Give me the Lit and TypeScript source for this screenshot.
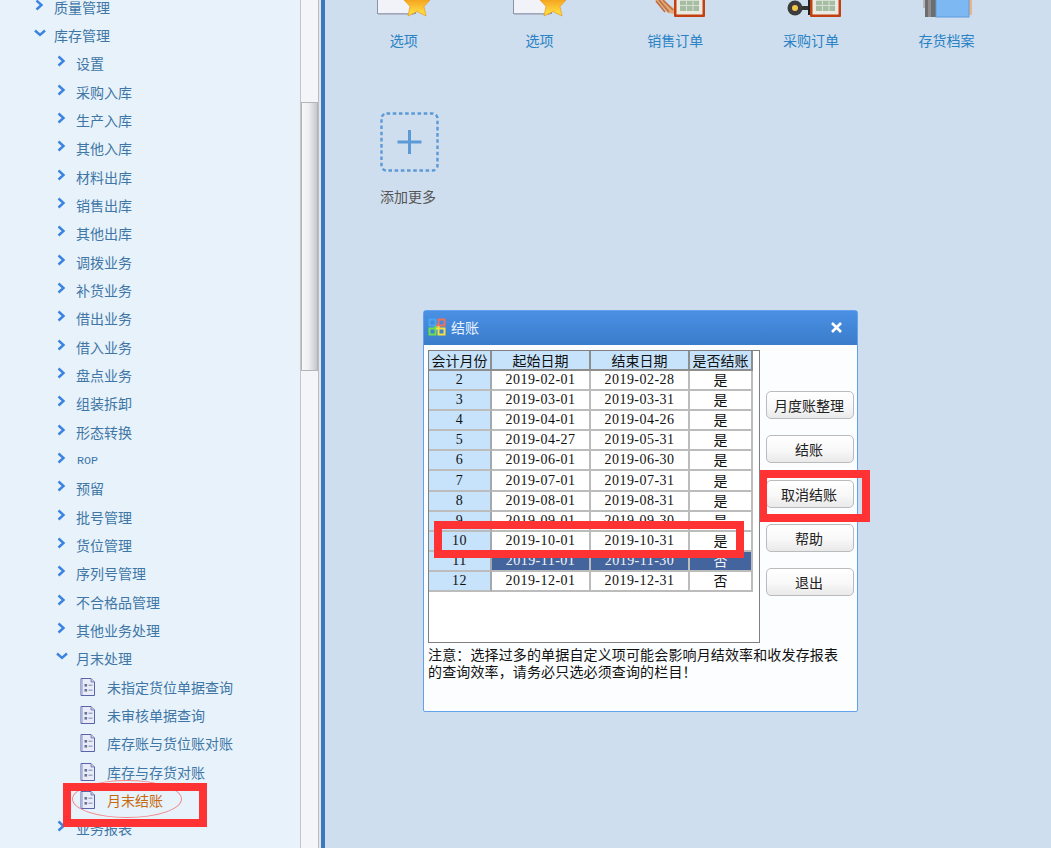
import { LitElement, html, css, svg } from 'lit';
import { customElement } from 'lit/decorators.js';

type Level = 'top' | 'sub' | 'leaf';
interface TreeRow {
  label: string;
  level: Level;
  open?: boolean;
  active?: boolean;
  small?: boolean;
}

const sub = (label: string): TreeRow => ({ label, level: 'sub' });
const leaf = (label: string, active = false): TreeRow => ({ label, level: 'leaf', active });

const TREE: TreeRow[] = [
  { label: '质量管理', level: 'top' },
  { label: '库存管理', level: 'top', open: true },
  ...['设置', '采购入库', '生产入库', '其他入库', '材料出库', '销售出库', '其他出库', '调拨业务', '补货业务', '借出业务', '借入业务', '盘点业务', '组装拆卸', '形态转换'].map(sub),
  { label: 'ROP', level: 'sub', small: true },
  ...['预留', '批号管理', '货位管理', '序列号管理', '不合格品管理', '其他业务处理'].map(sub),
  { label: '月末处理', level: 'sub', open: true },
  leaf('未指定货位单据查询'),
  leaf('未审核单据查询'),
  leaf('库存账与货位账对账'),
  leaf('库存与存货对账'),
  leaf('月末结账', true),
  sub('业务报表'),
];

const PERIODS: [string, string, string, string][] = [
  ['2', '2019-02-01', '2019-02-28', '是'],
  ['3', '2019-03-01', '2019-03-31', '是'],
  ['4', '2019-04-01', '2019-04-26', '是'],
  ['5', '2019-04-27', '2019-05-31', '是'],
  ['6', '2019-06-01', '2019-06-30', '是'],
  ['7', '2019-07-01', '2019-07-31', '是'],
  ['8', '2019-08-01', '2019-08-31', '是'],
  ['9', '2019-09-01', '2019-09-30', '是'],
  ['10', '2019-10-01', '2019-10-31', '是'],
  ['11', '2019-11-01', '2019-11-30', '否'],
  ['12', '2019-12-01', '2019-12-31', '否'],
];

const star = svg`<polygon points="63,-9 67,-1 76,0 70,6.5 72,16 63,11.5 54,16 56,6.5 50,0 59,-1" fill="url(#starFill)" stroke="#e59a1c" stroke-width="0.7"/>`;
const docStar = svg`
  <rect x="23.5" y="-10" width="38" height="23.5" fill="#f1f3f8" stroke="#8a92aa"/>
  <rect x="24" y="13.5" width="36" height="1.5" fill="#b4bac9"/>
  ${star}`;
const sheet = svg`
  <rect x="49" y="-6" width="31" height="23" rx="1" fill="#c43f10"/>
  <rect x="51.5" y="-6" width="26" height="20.5" fill="#e9ebe2"/>
  <rect x="55" y="-6" width="19" height="17" fill="#a6bda4"/>
  <path d="M61.5-6V11M68-6V11M55 0.5H74M55 5.5H74" stroke="#d5e0d2" stroke-width="1"/>`;

const ICONS = [
  docStar,
  docStar,
  svg`
    <path d="M30 0L37 0L50 9L50 14L43 13Z" fill="#e3a878"/>
    <path d="M34 0L44 12M38 0L48 10M31 1L40 12" stroke="#bd7040" stroke-width="1.6"/>
    ${sheet}`,
  svg`
    <circle cx="34" cy="8" r="7.5" fill="#3c3c3c"/>
    <circle cx="34" cy="8" r="3" fill="#f5c84a"/>
    <rect x="41" y="6" width="8" height="4" fill="#333"/>
    <rect x="47" y="0" width="2.5" height="15" fill="#222"/>
    ${sheet}`,
  svg`
    <rect x="26" y="0" width="3" height="8" fill="#b5b5b5"/>
    <rect x="28" y="-4" width="11" height="21" fill="#6d6d6d"/>
    <rect x="31" y="-4" width="3" height="21" fill="#8d8d8d"/>
    <rect x="72" y="-4" width="3" height="19" fill="#e8b48a"/>
    <rect x="39" y="-4" width="33" height="21" fill="#7db8f2" stroke="#5c9ce0"/>`,
];

const SHORTCUTS = ['选项', '选项', '销售订单', '采购订单', '存货档案'];
const ACTIONS = ['月度账整理', '结账', '取消结账', '帮助', '退出'];
const HEADERS = ['会计月份', '起始日期', '结束日期', '是否结账'];

@customElement('app-root')
export class AppRoot extends LitElement {
  static override styles = css`
    :host {
      display: block;
      position: relative;
      width: 1051px;
      height: 848px;
      overflow: hidden;
      font-family: 'Noto Sans CJK SC', 'Liberation Sans', sans-serif;
      font-size: 14px;
      background: #cedeee;
    }

    .page {
      display: flex;
      height: 100%;
    }

    /* left tree */
    .sidebar {
      width: 300px;
      flex: none;
      background: #e7f2fb;
      overflow: hidden;
    }

    .tree {
      margin-top: -7.5px;
    }

    .row {
      display: flex;
      align-items: center;
      height: 28.33px;
      color: #3f76a6;
      white-space: nowrap;
      line-height: 16px;
    }

    .row.top { padding-left: 34px; }
    .row.sub { padding-left: 56px; }
    .row.leaf { padding-left: 80px; }
    .row.active { color: #c76a0e; }

    .chevron {
      flex: none;
      width: 12px;
      height: 12px;
      margin-top: -4px;
      margin-right: 8px;
    }

    .leaf-icon {
      flex: none;
      width: 15px;
      height: 18px;
      margin-right: 12px;
    }

    .small {
      font-family: 'Liberation Mono', monospace;
      font-size: 11.67px;
      margin: 3px 0 0 1px;
    }

    .scrollbar {
      position: relative;
      width: 18px;
      flex: none;
      background: #f3f5f9;
      border-left: 1px solid #c4c6cc;
      box-sizing: border-box;
    }

    .thumb {
      position: absolute;
      top: 102px;
      left: 0;
      right: 0;
      height: 269px;
      box-sizing: border-box;
      border: 1px solid #b4b4b8;
      background: linear-gradient(90deg, #f8f8f9 0%, #eeeef0 45%, #c6c6ce 100%);
    }

    .gutter {
      width: 3px;
      flex: none;
      background: #e3e6ea;
      border-left: 1px solid #b9bcc2;
      box-sizing: border-box;
    }

    .divider {
      width: 4px;
      flex: none;
      background: #3b78c0;
    }

    /* desktop */
    .main {
      flex: 1;
      position: relative;
      padding-left: 11px;
    }

    .shortcuts {
      display: grid;
      grid-template-columns: repeat(5, 135.7px);
    }

    .shortcut {
      display: flex;
      flex-direction: column;
      align-items: center;
      color: #2a82c4;
    }

    .shortcut svg {
      display: block;
      width: 100px;
      height: 18px;
    }

    .shortcut span {
      margin-top: 14px;
      line-height: 16px;
    }

    .add {
      width: 58px;
      margin: 64px 0 0 44px;
      color: #565656;
      line-height: 16px;
      white-space: nowrap;
    }

    .add-box {
      display: block;
      width: 60px;
      height: 60px;
      margin-bottom: 16px;
    }

    /* settle dialog */
    .dialog {
      position: absolute;
      left: 98px;
      top: 310px;
      width: 435px;
      height: 402px;
      box-sizing: border-box;
      display: flex;
      flex-direction: column;
      background: #fbfdff;
      border: 1px solid #62a2ec;
      border-radius: 3px 3px 2px 2px;
    }

    .titlebar {
      flex: none;
      height: 34px;
      box-sizing: border-box;
      display: flex;
      align-items: center;
      padding: 0 15px 2px 4px;
      color: #e9f3fd;
      background: linear-gradient(180deg, #4a90e4 0%, #3a7cca 100%);
    }

    .titlebar .app-icon {
      width: 18px;
      height: 18px;
      margin-right: 5px;
    }

    .titlebar .title { flex: 1; }

    .titlebar .close {
      width: 11px;
      height: 11px;
    }

    .body {
      flex: 1;
      display: grid;
      grid-template-columns: 332px 88px;
      column-gap: 6px;
      padding: 5px 0 0 4px;
    }

    .frame {
      width: 332px;
      height: 293px;
      box-sizing: border-box;
      background: #fff;
      border: 1px solid #7f7f7f;
    }

    .grid {
      display: grid;
      grid-template-columns: 63px 99px 99px 63px;
      grid-template-rows: 20px;
      grid-auto-rows: 20.1px;
      font-family: 'Liberation Serif', 'Noto Sans CJK SC', serif;
      color: #111;
    }

    .cell {
      box-sizing: border-box;
      display: flex;
      align-items: center;
      justify-content: center;
      border-right: 2px solid #bcbcbc;
      border-bottom: 2px solid #bcbcbc;
      font-size: 14px;
      letter-spacing: 0.47px;
      line-height: 14px;
      white-space: nowrap;
    }

    .cell.cjk,
    .cell.head {
      font-family: 'Noto Sans CJK SC', sans-serif;
      letter-spacing: 0;
    }

    .cell.cjk {
      padding-bottom: 2px;
    }

    .cell.head {
      background: #c6e3fb;
      border-color: #8e8e8e;
    }

    .cell.month {
      background: #c6e3fb;
      border-right-color: #a5a8ab;
    }

    .cell.selected {
      background: #44649d;
      color: #f1f4fa;
    }

    .note {
      margin: 3px 0 0;
      color: #111;
      line-height: 17px;
      letter-spacing: 0.14px;
      white-space: nowrap;
    }

    .actions {
      display: flex;
      flex-direction: column;
      gap: 16.25px;
      padding-top: 41px;
    }

    .actions button {
      height: 28px;
      padding: 0 2px 0 0;
      font: inherit;
      color: #222;
      border: 1px solid #b9bbbd;
      border-radius: 5px;
      background: linear-gradient(180deg, #ffffff 0%, #f8f8f8 55%, #e9e9e9 100%);
    }

    /* hand-drawn annotations on top of the screenshot */
    .mark {
      position: absolute;
      box-sizing: border-box;
      border: 8px solid #ff3333;
    }

    .mark.tree-mark { left: 63px; top: 783px; width: 144px; height: 44px; }
    .mark.row-mark { left: 434px; top: 521px; width: 310px; height: 37px; }
    .mark.btn-mark { left: 760px; top: 470px; width: 110px; height: 52px; border-left-width: 7px; }

    .ring {
      position: absolute;
      left: 72px;
      top: 780px;
      width: 110px;
      height: 38px;
      box-sizing: border-box;
      border: 1px solid #f08a8a;
      border-radius: 50%;
    }
  `;

  private renderChevron(open?: boolean) {
    return html`<svg class="chevron" viewBox="0 0 12 12" fill="none" stroke="#3a83e2" stroke-width="2.4">
      ${open
        ? svg`<polyline points="1,3.5 6,8 11,3.5"/>`
        : svg`<polyline points="2.5,1.5 7.5,6 2.5,10.5"/>`}
    </svg>`;
  }

  private renderLeafIcon() {
    return html`<svg class="leaf-icon" viewBox="0 0 15 18">
      <path d="M1 .5H11L14.5 4V17.5H1Z" fill="#e8ecf9" stroke="#5b64a8"/>
      <rect x="1.5" y="1" width="1.5" height="16" fill="#b6bde0"/>
      <path d="M11 .5V4H14.5" fill="#c4cbe6" stroke="#5b64a8" stroke-width=".7"/>
      <rect x="4.5" y="6" width="2.6" height="2.6" fill="#6f7190"/>
      <rect x="4.5" y="11" width="2.6" height="2.6" fill="#6f7190"/>
      <path d="M8.5 7.2H12.5M8.5 12.2H12.5" stroke="#7f8bb6"/>
    </svg>`;
  }

  private renderTree() {
    return TREE.map(
      (r) => html`<div class="row ${r.level} ${r.active ? 'active' : ''}">
        ${r.level === 'leaf' ? this.renderLeafIcon() : this.renderChevron(r.open)}
        <span class=${r.small ? 'small' : ''}>${r.label}</span>
      </div>`,
    );
  }

  private renderPeriod(p: [string, string, string, string]) {
    const selected = p[0] === '11';
    const sel = selected ? 'selected' : '';
    return html`
      <div class="cell month">${p[0]}</div>
      <div class="cell ${sel}">${p[1]}</div>
      <div class="cell ${sel}">${p[2]}</div>
      <div class="cell cjk ${sel}">${p[3]}</div>
    `;
  }

  override render() {
    return html`
      <div class="page">
        <aside class="sidebar"><div class="tree">${this.renderTree()}</div></aside>
        <div class="scrollbar"><div class="thumb"></div></div>
        <div class="gutter"></div>
        <div class="divider"></div>
        <main class="main">
          <svg width="0" height="0" style="position:absolute">
            <defs>
              <linearGradient id="starFill" x1="0" y1="0" x2="0" y2="1">
                <stop offset="0.25" stop-color="#f39a1c" />
                <stop offset="0.85" stop-color="#ffd83d" />
              </linearGradient>
            </defs>
          </svg>
          <div class="shortcuts">
            ${SHORTCUTS.map(
              (label, i) => html`<div class="shortcut">
                <svg viewBox="0 0 100 18">${ICONS[i]}</svg>
                <span>${label}</span>
              </div>`,
            )}
          </div>
          <div class="add">
            <svg class="add-box" viewBox="0 0 60 60" fill="none">
              <rect x="1.5" y="1.5" width="56" height="57" rx="5" stroke="#5c9ad6" stroke-width="2.4" stroke-dasharray="3.6 2.6" />
              <path d="M29.5 18V42M17.5 30H41.5" stroke="#5c9ad6" stroke-width="3" />
            </svg>
            添加更多
          </div>
          <section class="dialog">
            <header class="titlebar">
              <svg class="app-icon" viewBox="0 0 18 18" fill="none" stroke-width="2">
                <path d="M10 7.5H1.5V1.5H7.5V10" stroke="#4aa6f0" />
                <path d="M8 7.5H16.5V1.5H10.5V10" stroke="#f0705a" />
                <path d="M10 10.5H1.5V16.5H7.5V8" stroke="#6fe04a" />
                <path d="M8 10.5H16.5V16.5H10.5V8" stroke="#f5e040" />
              </svg>
              <span class="title">结账</span>
              <svg class="close" viewBox="0 0 11 11" stroke="#fff" stroke-width="2.6">
                <path d="M1 1L10 10M10 1L1 10" />
              </svg>
            </header>
            <div class="body">
              <div>
                <div class="frame">
                  <div class="grid">
                    ${HEADERS.map((h) => html`<div class="cell head">${h}</div>`)}
                    ${PERIODS.map((p) => this.renderPeriod(p))}
                  </div>
                </div>
                <p class="note">注意：选择过多的单据自定义项可能会影响月结效率和收发存报表<br />的查询效率，请务必只选必须查询的栏目！</p>
              </div>
              <div class="actions">
                ${ACTIONS.map((a) => html`<button>${a}</button>`)}
              </div>
            </div>
          </section>
        </main>
      </div>
      <div class="ring"></div>
      <div class="mark tree-mark"></div>
      <div class="mark row-mark"></div>
      <div class="mark btn-mark"></div>
    `;
  }
}
